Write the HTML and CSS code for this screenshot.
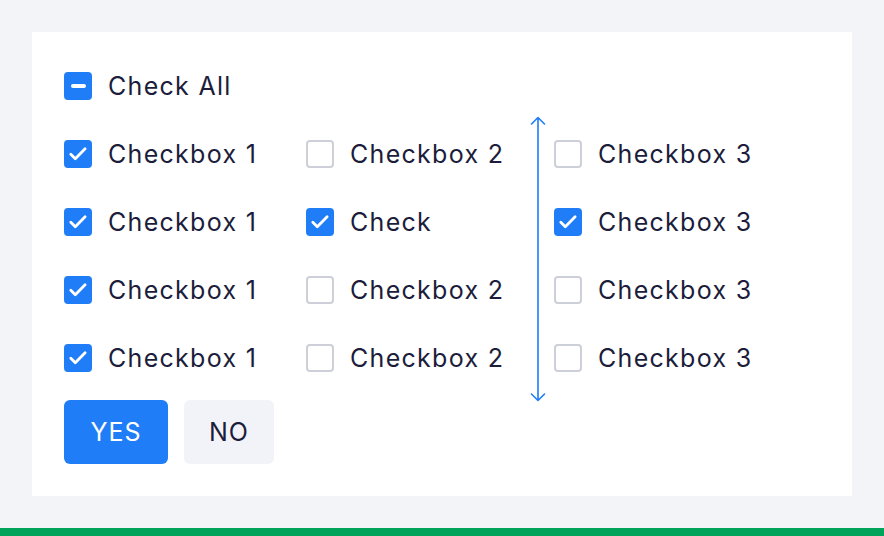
FILE: index.html
```html
<!DOCTYPE html>
<html>
<head>
<meta charset="utf-8">
<link rel="stylesheet" href="styles.css">
</head>
<body>
<div class="page">
  <div class="card">
    <label class="item all">
      <span class="box on"><span class="dash"></span></span>
      <span class="txt">Check All</span>
    </label>
    <div class="grid">
      <label class="item"><span class="box on"><svg viewBox="0 0 28 28"><path d="M6.8 14.2l4.5 4.5 9.8-10"/></svg></span><span class="txt">Checkbox 1</span></label>
      <label class="item"><span class="box"></span><span class="txt">Checkbox 2</span></label>
      <div class="arrow"><svg viewBox="0 0 16 286" preserveAspectRatio="none"><path d="M8 1.5V284.5M1.5 8L8 1.5 14.5 8M1.5 278L8 284.5 14.5 278"/></svg></div>
      <label class="item"><span class="box"></span><span class="txt">Checkbox 3</span></label>

      <label class="item"><span class="box on"><svg viewBox="0 0 28 28"><path d="M6.8 14.2l4.5 4.5 9.8-10"/></svg></span><span class="txt">Checkbox 1</span></label>
      <label class="item"><span class="box on"><svg viewBox="0 0 28 28"><path d="M6.8 14.2l4.5 4.5 9.8-10"/></svg></span><span class="txt">Check</span></label>
      <label class="item"><span class="box on"><svg viewBox="0 0 28 28"><path d="M6.8 14.2l4.5 4.5 9.8-10"/></svg></span><span class="txt">Checkbox 3</span></label>

      <label class="item"><span class="box on"><svg viewBox="0 0 28 28"><path d="M6.8 14.2l4.5 4.5 9.8-10"/></svg></span><span class="txt">Checkbox 1</span></label>
      <label class="item"><span class="box"></span><span class="txt">Checkbox 2</span></label>
      <label class="item"><span class="box"></span><span class="txt">Checkbox 3</span></label>

      <label class="item"><span class="box on"><svg viewBox="0 0 28 28"><path d="M6.8 14.2l4.5 4.5 9.8-10"/></svg></span><span class="txt">Checkbox 1</span></label>
      <label class="item"><span class="box"></span><span class="txt">Checkbox 2</span></label>
      <label class="item"><span class="box"></span><span class="txt">Checkbox 3</span></label>
    </div>
    <div class="buttons">
      <button class="btn yes">YES</button>
      <button class="btn no">NO</button>
    </div>
  </div>
</div>
<div class="bar"></div>
</body>
</html>
```
FILE: styles.css
```css
* { box-sizing: border-box; }
html, body { margin: 0; padding: 0; }
body {
  width: 884px;
  height: 536px;
  background: #f3f4f8;
  font-family: "Inter", "Noto Sans", sans-serif;
  color: #1b1d3b;
  overflow: hidden;
}
.page {
  padding: 32px 32px 0 32px;
  height: 528px;
}
.card {
  background: #fff;
  width: 820px;
  height: 464px;
  padding: 20px 32px 32px 32px;
}
.item {
  display: flex;
  align-items: center;
  gap: 16px;
  height: 68px;
}
.box {
  width: 28px;
  height: 28px;
  border: 2px solid #cdd0d8;
  border-radius: 4px;
  background: #fff;
  display: flex;
  align-items: center;
  justify-content: center;
  flex: none;
}
.box.on {
  background: #1f7df7;
  border-color: #1f7df7;
}
.box svg {
  width: 28px;
  height: 28px;
  flex: none;
  fill: none;
  stroke: #fff;
  stroke-width: 2.8;
  stroke-linecap: round;
  stroke-linejoin: round;
}
.dash {
  width: 15px;
  height: 4px;
  border-radius: 2px;
  background: #fff;
}
.txt {
  font-size: 25px;
  line-height: 32px;
  letter-spacing: 1.3px;
  font-weight: 400;
}
.grid {
  display: grid;
  grid-template-columns: 242px 216px 32px 1fr;
  grid-auto-rows: 68px;
}
.arrow {
  grid-column: 3;
  grid-row: 1 / span 4;
  margin: -4px 0 -10px 0;
  display: flex;
  justify-content: center;
}
.arrow svg {
  width: 16px;
  height: 100%;
  fill: none;
  stroke: #1f7df7;
  stroke-width: 1.6;
  stroke-linecap: round;
  stroke-linejoin: round;
}
.buttons {
  display: flex;
  gap: 16px;
  margin-top: 8px;
}
.btn {
  height: 64px;
  border: none;
  border-radius: 6px;
  font-family: inherit;
  font-size: 25px;
  letter-spacing: 1px;
  padding: 0;
}
.yes {
  width: 104px;
  background: #1f7df7;
  color: #fff;
}
.no {
  width: 90px;
  background: #f2f3f8;
  color: #1b1d3b;
}
.bar {
  height: 8px;
  background: #00a35a;
}
```
